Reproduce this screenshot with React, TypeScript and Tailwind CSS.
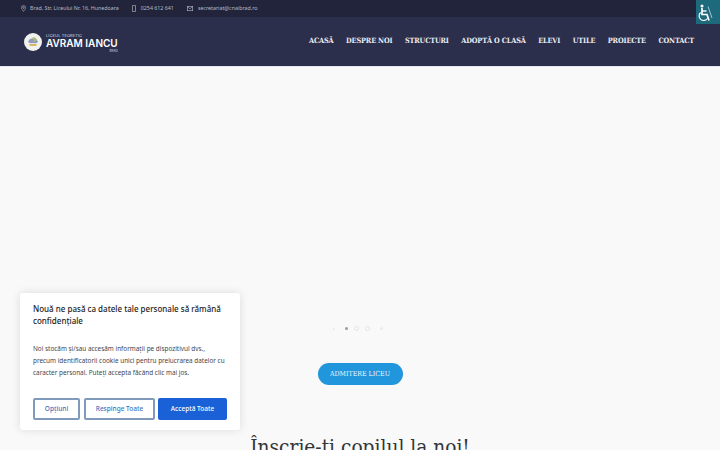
const navItems = ['ACASĂ', 'DESPRE NOI', 'STRUCTURI', 'ADOPTĂ O CLASĂ', 'ELEVI', 'UTILE', 'PROIECTE', 'CONTACT']

function Logo() {
  return (
    <div className="flex items-center gap-[4px]">
      <svg width="18" height="18" viewBox="0 0 18 18">
        <circle cx="9" cy="9" r="9" fill="#f1f1ee" />
        <path d="M4 9 Q6 4 9 6 Q12 4 14 9 Q12 11 9 10 Q6 11 4 9Z" fill="#8f9ac4" />
        <path d="M8 5 Q11 3 13 7 L10 9Z" fill="#a9b86c" />
        <path d="M5 11 H13 L12 13 H6Z" fill="#d9b85f" />
      </svg>
      <div className="flex flex-col pt-[3px] font-['Inter',sans-serif] text-white">
        <span className="text-[4px] leading-[5px] tracking-[0.1px] text-[#d8dae6]">LICEUL TEORETIC</span>
        <span className="text-[10px] font-semibold leading-[11px]">AVRAM IANCU</span>
        <span className="text-[3px] leading-[4px] text-right text-[#d8dae6]">BRAD</span>
      </div>
    </div>
  )
}

function WheelchairIcon() {
  return (
    <svg width="24" height="24" viewBox="0 0 24 24" fill="none" stroke="#ffffff" strokeWidth="1.2">
      <circle cx="6" cy="6" r="1.5" fill="#ffffff" stroke="none" />
      <path d="M6 8 V14.5 H11 L13 20.5" strokeWidth="1.7" />
      <path d="M6 11 H10.5" strokeWidth="1.4" />
      <path d="M4.6 12.5 A4.6 4.6 0 1 0 11.5 18.5" />
      <path d="M12 6.5 L16 18" strokeWidth="0.6" />
    </svg>
  )
}

export default function App() {
  return (
    <div className="relative h-[450px] w-[720px] overflow-hidden bg-[#f9f9f9]">
      {/* Top bar */}
      <div className="flex h-[17px] items-center gap-[13px] bg-[#21243a] pl-[21px] font-['Noto_Sans',sans-serif] text-[5.3px] text-[#b9bbc8]">
        <span className="flex items-center gap-[4px]">
          <svg width="5" height="7" viewBox="0 0 6 8" fill="none" stroke="#b9bbc8" strokeWidth="0.7">
            <path d="M3 7.5 C1.5 5.5 .5 4.2 .5 3 A2.5 2.5 0 0 1 5.5 3 C5.5 4.2 4.5 5.5 3 7.5Z" />
            <circle cx="3" cy="3" r="0.9" />
          </svg>
          Brad, Str. Liceului Nr. 16, Hunedoara
        </span>
        <span className="flex items-center gap-[5px]">
          <svg width="4" height="7" viewBox="0 0 4 7" fill="none" stroke="#b9bbc8" strokeWidth="0.7">
            <rect x="0.4" y="0.4" width="3.2" height="6.2" rx="0.5" />
          </svg>
          0254 612 641
        </span>
        <span className="flex items-center gap-[5px]">
          <svg width="6" height="5" viewBox="0 0 6 5" fill="none" stroke="#b9bbc8" strokeWidth="0.6">
            <rect x="0.3" y="0.3" width="5.4" height="4.4" />
            <path d="M0.3 0.5 L3 2.8 L5.7 0.5" />
          </svg>
          secretariat@cnaibrad.ro
        </span>
      </div>

      {/* Nav */}
      <header className="flex h-[50px] items-center justify-between border-b border-[#e3e6f2] bg-[#2b2f4c] pl-[24px] pr-[26px]">
        <Logo />
        <nav className="flex gap-[12.5px] font-['DejaVu_Serif_Condensed','DejaVu_Serif',serif] text-[7.3px] font-bold tracking-[-0.15px] text-[#eceef4]">
          {navItems.map((item) => (
            <a key={item} href="#">{item}</a>
          ))}
        </nav>
      </header>

      {/* Slider */}
      <main className="flex flex-col items-center">
        <div className="ml-[-5px] mt-[259px] flex h-[5px] items-center gap-[6px]">
          <span className="mr-[4px] text-[7px] leading-none text-[#dddddd]">›</span>
          <span className="size-[3px] rounded-full bg-[#9a9a9a]" />
          <span className="size-[5px] rounded-full border border-[#e4e4e4]" />
          <span className="size-[5px] rounded-full border border-[#e4e4e4]" />
          <span className="ml-1 size-[3px] rounded-full bg-[#eaeaea]" />
        </div>
        <a href="#" className="mt-[32px] flex h-[22px] w-[85px] items-center justify-center rounded-full bg-[#2196dc] font-['DejaVu_Serif_Condensed','DejaVu_Serif',serif] text-[7px] text-[#eef8fd]">
          ADMITERE LICEU
        </a>
        <h2 className="mt-[48px] whitespace-nowrap font-['DejaVu_Serif_Condensed','DejaVu_Serif',serif] text-[20.7px] leading-[28px] text-[#33353a]">
          Înscrie-ți copilul la noi!
        </h2>
      </main>

      {/* Cookie banner */}
      <div className="absolute bottom-[20px] left-[20px] flex w-[220px] flex-col rounded-[3px] bg-white px-[13px] pb-[10px] pt-[10px] font-['Noto_Sans',sans-serif] shadow-[0_0_10px_rgba(0,0,0,0.12)]">
        <p className="text-[8px] font-medium leading-[12px] text-[#222222]">
          Nouă ne pasă ca datele tale personale să rămână confidențiale
        </p>
        <p className="mt-[16px] text-[6.4px] leading-[12px] text-[#44464d]">
          Noi stocăm și/sau accesăm informații pe dispozitivul dvs., precum identificatorii cookie unici pentru prelucrarea datelor cu caracter personal. Puteți accepta făcând clic mai jos.
        </p>
        <div className="mt-[19px] flex gap-[4px] text-[6.5px] font-medium">
          <button className="h-[22px] w-[47px] rounded-[2px] border-2 border-[#7f9abb] text-[#3f73c0]">Opțiuni</button>
          <button className="h-[22px] w-[71px] rounded-[2px] border-2 border-[#7f9abb] text-[#3f73c0]">Respinge Toate</button>
          <button className="ml-[-1px] h-[22px] w-[69px] rounded-[2px] bg-[#1a60d6] text-white">Acceptă Toate</button>
        </div>
      </div>

      {/* Accessibility button */}
      <div className="absolute right-0 top-0 size-[24px] bg-[#1e6a7d]">
        <WheelchairIcon />
      </div>
    </div>
  )
}
